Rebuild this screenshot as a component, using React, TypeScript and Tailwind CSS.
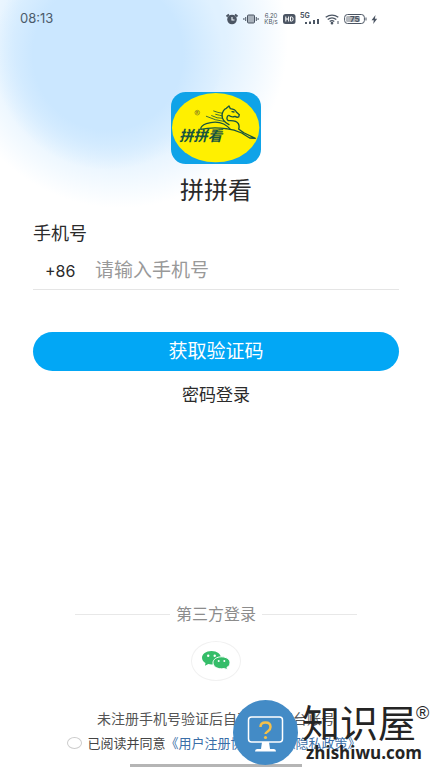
import type React from "react";
import { useState } from "react";

const StatusIcons: React.FC = () => (
  <div className="flex items-center text-[#4b5563]">
    {/* 闹钟 */}
    <svg width="14" height="14" viewBox="0 0 14 14" fill="none">
      <circle cx="7" cy="7.5" r="4.8" fill="currentColor" />
      <path d="M1.500 4.500 4 2.500M12.500 4.500 10 2.500" stroke="currentColor" strokeWidth="2" />
      <path d="M7 5V8h2.500" stroke="#f3f9ff" strokeWidth="1.1" />
    </svg>
    {/* 震动 */}
    <svg className="ml-1" width="16" height="14" viewBox="0 0 16 14" fill="none" stroke="currentColor">
      <rect x="4.500" y="3" width="7" height="8" rx="1" fill="#a9b2bc" />
      <path d="M2.700 5v4M13.300 5v4M.9 6v2M15.100 6v2" />
    </svg>
    <div className="ml-1 flex w-4 flex-col items-center text-[6px] leading-[6px]">
      <span>6.20</span>
      <span>KB/s</span>
    </div>
    {/* HD */}
    <svg className="ml-1" width="13" height="10" viewBox="0 0 13 10" fill="none">
      <rect width="12.500" height="10" rx="2.500" fill="currentColor" />
      <path d="M2.800 2.500v5M5.600 2.500v5M2.800 5h2.800M7.500 2.900v4.200h1q1.600 0 1.600-2.100T8.500 2.900Z" stroke="#fff" />
    </svg>
    {/* 信号 */}
    <svg className="ml-1" width="21" height="14" viewBox="0 0 21 14" fill="currentColor">
      <text x="0" y="6" fontSize="7" fontWeight="700">5G</text>
      <path d="M5 10h2v2H5zM9 9.500h2V12H9zM13 8h2v4h-2zM17 7h2v5h-2z" />
    </svg>
    {/* WiFi */}
    <svg className="ml-1" width="15" height="12" viewBox="0 0 15 12" fill="none" stroke="currentColor" strokeWidth="1.3">
      <path d="M.7 4.300Q7 -.2 13.300 4.300M2.700 6.500Q7 3.200 11.300 6.500M4.700 8.600Q7 6.800 9.300 8.600" />
      <circle cx="7" cy="10.200" r=".7" fill="currentColor" />
      <path d="M13 8v3" strokeWidth="1" />
    </svg>
    {/* 电池 */}
    <svg className="ml-1" width="23" height="12" viewBox="0 0 23 12" fill="none">
      <rect x=".6" y="1.500" width="19.800" height="9" rx="3" stroke="currentColor" />
      <rect x="2" y="3" width="14" height="6" rx="1.500" fill="#b4b8bd" />
      <path d="M22 4.500v3" stroke="currentColor" />
      <text x="6" y="8.800" fontSize="8" fontWeight="700" fill="currentColor">75</text>
    </svg>
    <svg className="ml-1" width="7" height="9" viewBox="0 0 7 9" fill="currentColor">
      <path d="M4.500 0 .5 5.200h2.300L2.200 9l4-5.300H3.900z" />
    </svg>
  </div>
);

const AppLogo: React.FC = () => (
  <svg className="h-[72px] w-[90px]" viewBox="0 0 270 216" fill="none" aria-label="拼拼看">
    <rect width="270" height="216" rx="44" fill="#0fa3e8" />
    <ellipse cx="134" cy="107" rx="131" ry="104" fill="#fff000" />
    <g stroke="#17543f" strokeWidth="4" strokeLinecap="round" strokeLinejoin="round">
      <path d="M174 98Q153 88 153 70Q155 53 166 49L174 42 178 50Q193 52 196 60L205 68 203 75Q198 77 192 73Q182 77 173 70" />
      <path d="M171 71Q164 80 172 86Q196 84 202 95Q206 103 203 111Q210 117 220 123L253 139 236 138 212 123Q190 112 165 110" />
      <path d="M183 59l6 1" />
      <path d="M89 112Q89 101 106 95Q135 85 158 96Q168 101 177 111M89 112Q125 104 165 110" strokeWidth="3.500" />
      <path d="M128 57Q140 62 155 64M134 67Q146 70 155 72M122 71Q138 80 155 79M106 73Q134 86 158 88" strokeWidth="2.500" />
    </g>
    <circle cx="79" cy="62" r="7" stroke="#7c7a1e" strokeWidth="2" />
    <text x="75" y="66" fontSize="11" fontWeight="700" fill="#7c7a1e">R</text>
    <text x="24" y="146" fontSize="43" fontStyle="italic" fontWeight="700" fill="#17543f">拼拼看</text>
  </svg>
);

const WechatIcon: React.FC = () => (
  <svg width="30" height="22" viewBox="0 0 30 22">
    <path d="M10.500 1C4.900 1 1 4 1 7.800c0 2.200 1.300 4 3.500 5.300L4 15.800l3.300-1.700c1 .3 2.100.4 3.200.4 5.500 0 9.500-2.900 9.500-6.700S16 1 10.500 1z" fill="#35bd69" />
    <path d="M20.500 6.800c-4.900 0-8.500 2.600-8.500 6s3.600 6 8.500 6c1 0 2-.1 2.900-.4l3 1.600-.5-2.500c1.900-1.100 3.100-2.700 3.100-4.700 0-3.400-3.600-6-8.500-6z" fill="#35bd69" stroke="#fff" strokeWidth="1" />
    <g fill="#fff">
      <circle cx="7.200" cy="5.800" r="1.200" />
      <circle cx="13.700" cy="5.800" r="1.200" />
      <circle cx="17.700" cy="11" r="1" />
      <circle cx="23.300" cy="11" r="1" />
    </g>
  </svg>
);

const SiteBadge: React.FC = () => (
  <div className="pointer-events-none absolute right-0 bottom-[3px] flex items-center text-[#242424]">
    <svg width="65" height="65" viewBox="0 0 65 65" fill="none">
      <circle cx="32.500" cy="32.500" r="32.500" fill="#438bc6" />
      <rect x="15.500" y="17" width="34" height="25" rx="3" stroke="#fff" strokeWidth="1.500" />
      <path d="M29 42h7l1 7h4q2 0 2 2.500H22q0-2.500 2-2.500h4z" fill="#fff" />
      <path d="M27.500 27q0-4.500 5-4.500t5 4.500q0 2.500-2.500 4.200T32.500 34" stroke="#f5c04a" strokeWidth="2.500" />
      <circle cx="32.500" cy="37.500" r="1.600" fill="#f5c04a" />
    </svg>
    <div className="ml-1 flex w-[130px] flex-col">
      <div className="flex items-start">
        <span className="text-[38px] leading-10">知识屋</span>
        <span className="font-['Liberation_Sans'] text-[18px] leading-5">®</span>
      </div>
      <span className="pl-1 font-['Open_Sans'] text-[17px] leading-5 font-bold">zhishiwu.com</span>
    </div>
  </div>
);

const App: React.FC = () => {
  const [phone, setPhone] = useState("");
  const [agreed, setAgreed] = useState(false);

  return (
    <div className="relative flex min-h-screen flex-col overflow-hidden bg-white bg-[radial-gradient(circle_at_108px_55px,#cbe7ff_75px,#cbe7ff00_115px),radial-gradient(circle_at_120px_40px,#e0f1ff_105px,#ffffff_168px)] font-['Inter','Noto_Sans_CJK_SC',sans-serif] text-[#2b2b2b]">
      <header className="flex h-[38px] items-center justify-between pr-[54px] pl-5">
        <span className="text-[13px] text-[#4b5b6b]">08:13</span>
        <StatusIcons />
      </header>

      <main className="flex grow flex-col px-[33px] pt-[54px]">
        <div className="flex flex-col items-center">
          <AppLogo />
          <h1 className="mt-[9px] text-[24px] leading-9">拼拼看</h1>
        </div>

        <form className="mt-[13px] flex flex-col" onSubmit={(e) => e.preventDefault()}>
          <label htmlFor="phone" className="text-[18px] leading-6">手机号</label>
          <div className="mt-[6px] flex h-[38px] items-center border-b border-[#e5e5e5] pl-3">
            <span className="w-[50px] text-[16px]">+86</span>
            <input
              id="phone"
              type="tel"
              value={phone}
              onChange={(e) => setPhone(e.target.value)}
              placeholder="请输入手机号"
              className="min-w-0 grow text-[19px] leading-7 outline-none placeholder:text-[#999999]"
            />
          </div>
          <button type="submit" className="mt-[42px] h-[39px] rounded-full bg-[#02a7f5] pt-[2px] text-[19px] text-white">
            获取验证码
          </button>
          <button type="button" className="mt-3 self-center text-[17px] leading-6">密码登录</button>
        </form>

        <section className="mt-auto flex flex-col items-center">
          <div className="flex w-full items-center gap-[6px] px-[42px] text-[16px] leading-6 text-[#8c8c8c]">
            <span className="h-px grow bg-[#e8e8e8]" />
            第三方登录
            <span className="h-px grow bg-[#e8e8e8]" />
          </div>
          <button type="button" aria-label="微信登录" className="mt-[15px] flex h-10 w-[50px] items-center justify-center rounded-[50%] border border-[#f1f1f1]">
            <WechatIcon />
          </button>
          <p className="mt-[26px] text-[14px] leading-6 whitespace-nowrap text-[#555555]">未注册手机号验证后自动创建平台账号</p>
        </section>

        <div className="flex items-center gap-[5px] self-center pr-1 text-[13px] leading-6 whitespace-nowrap text-[#444444]">
          <input
            id="agree"
            type="checkbox"
            checked={agreed}
            onChange={(e) => setAgreed(e.target.checked)}
            className="h-3 w-[15px] appearance-none rounded-[50%] border border-[#cccccc] checked:bg-[#02a7f5]"
          />
          <label htmlFor="agree">
            已阅读并同意<a href="#terms" className="text-[#3a6ea8]">《用户注册协议》</a>和<a href="#privacy" className="text-[#3a6ea8]">《隐私政策》</a>
          </label>
        </div>
      </main>

      <footer className="flex justify-center pt-[9px] pb-[1px]">
        <span className="h-[3px] w-2/5 bg-[#b5b5b5]" />
      </footer>

      <SiteBadge />
    </div>
  );
};

export default App;
